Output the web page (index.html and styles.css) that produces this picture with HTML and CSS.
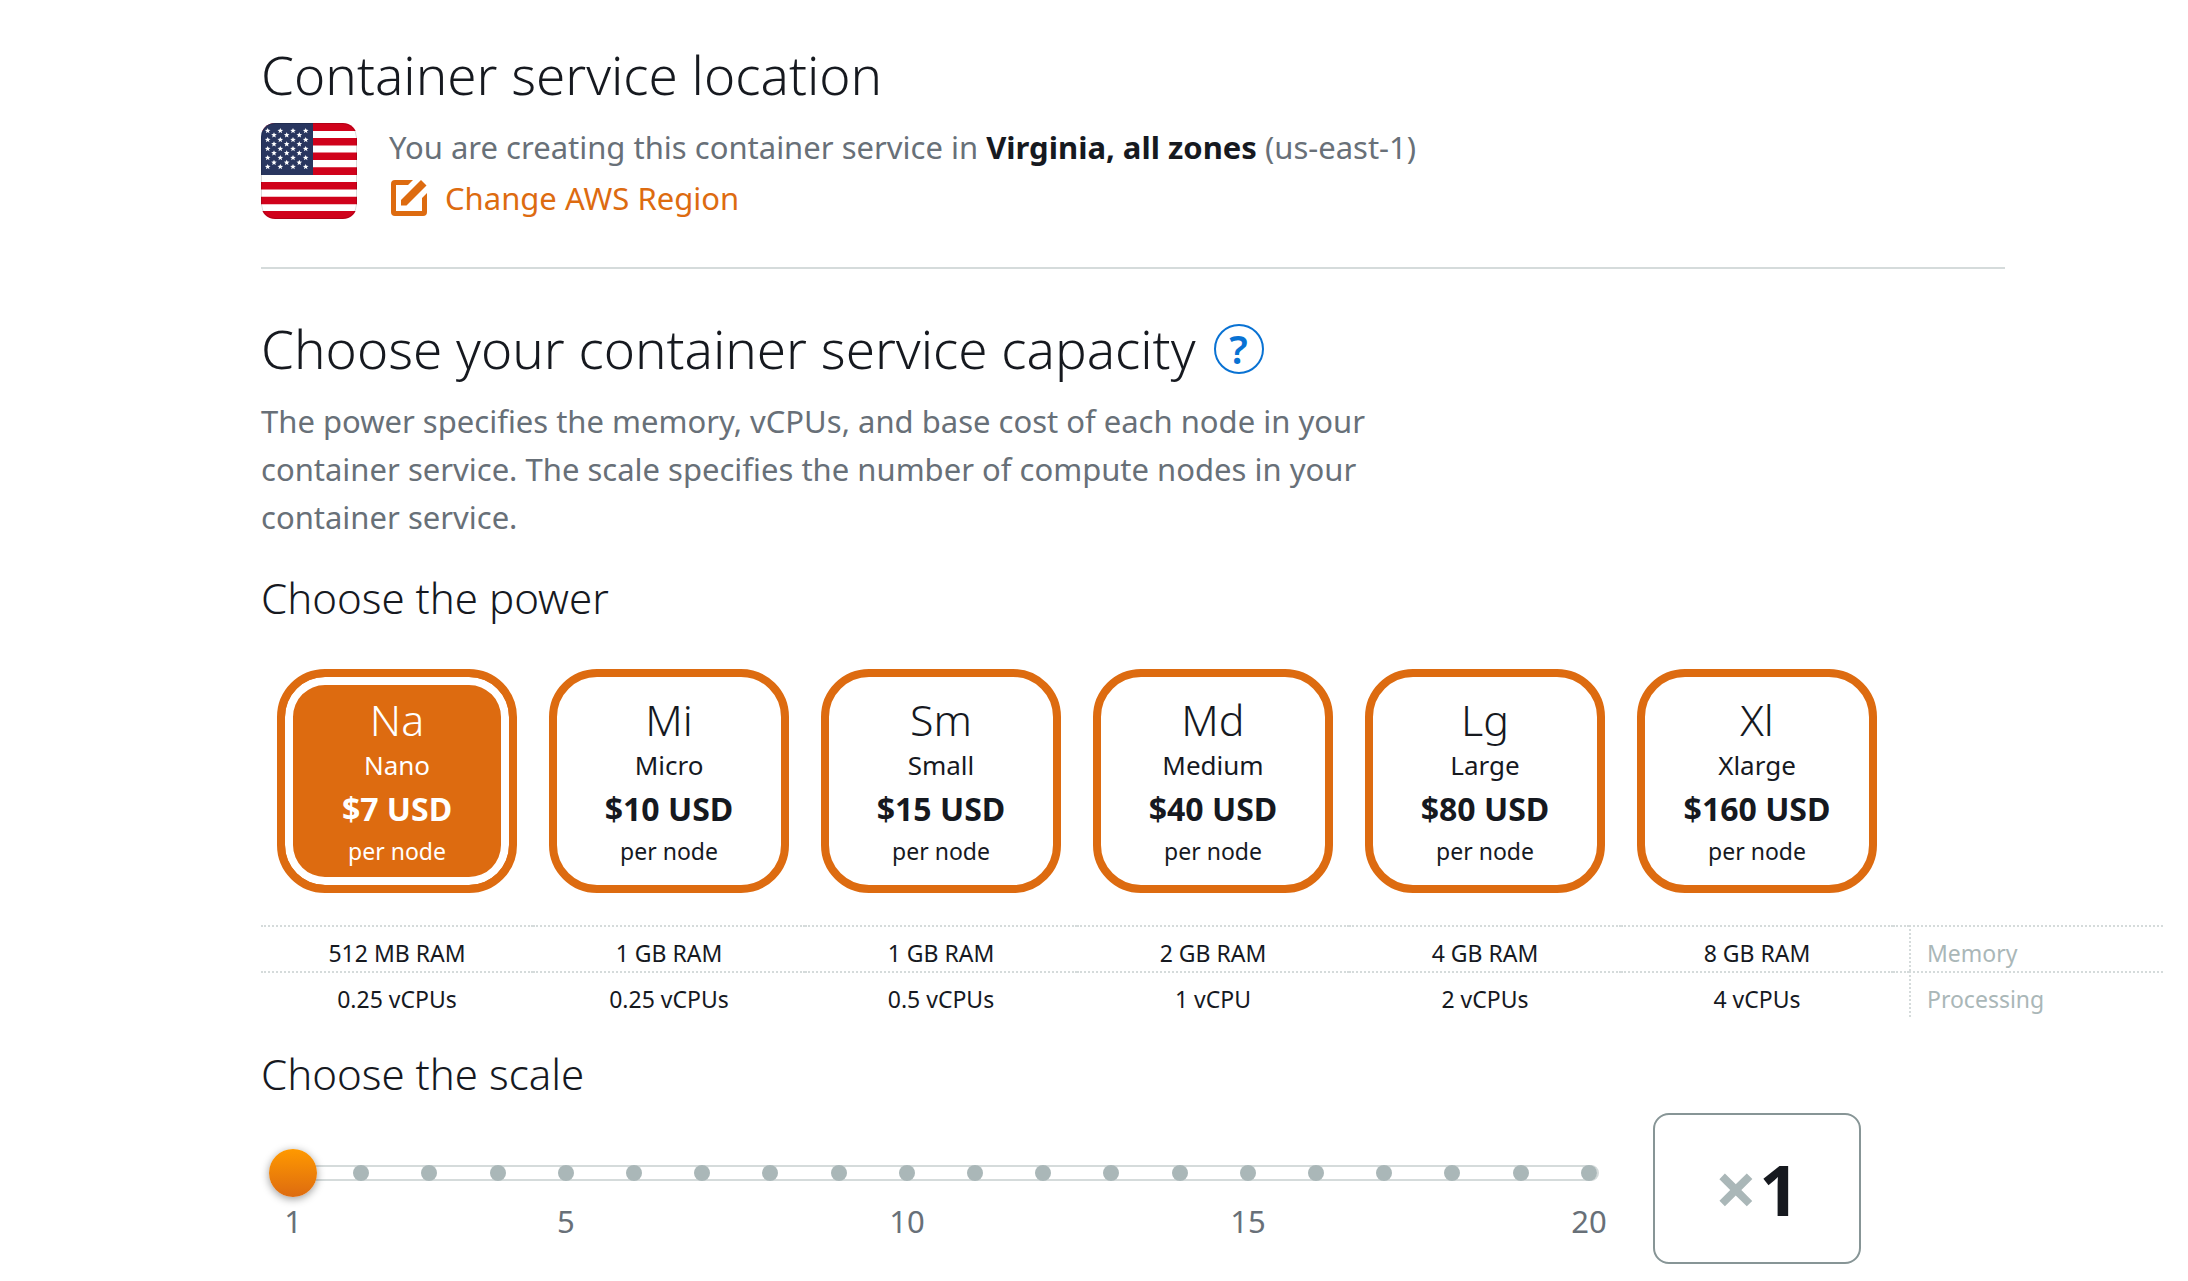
FILE: index.html
```html
<!DOCTYPE html>
<html lang="en">
<head>
<meta charset="utf-8">
<meta name="viewport" content="width=device-width, initial-scale=1">
<title>Create a container service</title>
<link rel="stylesheet" href="styles.css">
</head>
<body>
<main class="page">
  <section class="location">
    <h1 class="title">Container service location</h1>
    <div class="location-row">
      <svg class="flag" viewBox="0 0 96 96" role="img" aria-label="United States">
        <defs>
          <path id="star" d="M0-2.8L.8-.9 2.8-.8 1.2.5 1.8 2.5 0 1.4-1.8 2.5-1.2.5-2.8-.8-.8-.9Z"/>
          <g id="row-a"><use href="#star" x="6.7"/><use href="#star" x="19.3"/><use href="#star" x="32"/><use href="#star" x="44.7"/></g>
          <g id="row-b"><use href="#star" x="13"/><use href="#star" x="25.7"/><use href="#star" x="38.3"/></g>
        </defs>
        <rect width="96" height="96" fill="#fff"/>
        <path fill="#d0021b" d="M0 0h96v8H0zM0 15h96v7.400H0zM0 29.500h96V37H0zM0 44.300h96v7.700H0zM0 59h96v7.500H0zM0 73.700h96v7.500H0zM0 88h96v8H0z"/>
        <path fill="#29365f" d="M0 0h52v52H0z"/>
        <g fill="#fff">
          <use href="#row-a" y="7.700"/><use href="#row-b" y="12"/>
          <use href="#row-a" y="16.700"/><use href="#row-b" y="21"/>
          <use href="#row-a" y="25.700"/><use href="#row-b" y="30"/>
          <use href="#row-a" y="34.700"/><use href="#row-b" y="39.500"/>
          <use href="#row-a" y="43.700"/>
        </g>
        <rect x=".5" y=".5" width="95" height="95" rx="14" fill="none" stroke="#000" stroke-opacity=".15"/>
      </svg>
      <div class="location-info">
        <p class="text">You are creating this container service in <strong>Virginia, all zones</strong> (us-east-1)</p>
        <a class="region-link" href="#region">
          <svg class="edit-icon" viewBox="0 0 36 36" aria-hidden="true">
            <path d="M22 0H4Q0 0 0 4V32Q0 36 4 36H32Q36 36 36 32V13L31 18V31H5V5H17Z"/>
            <path d="M30 0L35.500 5.500 15.500 25.500H10V20Z"/>
          </svg>
          <span>Change AWS Region</span>
        </a>
      </div>
    </div>
  </section>

  <hr class="divider">

  <section class="capacity">
    <div class="title-row">
      <h2 class="title">Choose your container service capacity</h2>
      <button class="help" type="button" aria-label="Help with capacity">?</button>
    </div>
    <p class="text intro">The power specifies the memory, vCPUs, and base cost of each node in your container service. The scale specifies the number of compute nodes in your container service.</p>

    <h3 class="subtitle" id="power-title">Choose the power</h3>
    <div class="powers" role="radiogroup" aria-labelledby="power-title">
      <label class="power"><input type="radio" name="power" checked><span class="abbr">Na</span><span class="name">Nano</span><span class="price">$7 USD</span><span class="unit">per node</span></label>
      <label class="power"><input type="radio" name="power"><span class="abbr">Mi</span><span class="name">Micro</span><span class="price">$10 USD</span><span class="unit">per node</span></label>
      <label class="power"><input type="radio" name="power"><span class="abbr">Sm</span><span class="name">Small</span><span class="price">$15 USD</span><span class="unit">per node</span></label>
      <label class="power"><input type="radio" name="power"><span class="abbr">Md</span><span class="name">Medium</span><span class="price">$40 USD</span><span class="unit">per node</span></label>
      <label class="power"><input type="radio" name="power"><span class="abbr">Lg</span><span class="name">Large</span><span class="price">$80 USD</span><span class="unit">per node</span></label>
      <label class="power"><input type="radio" name="power"><span class="abbr">Xl</span><span class="name">Xlarge</span><span class="price">$160 USD</span><span class="unit">per node</span></label>
    </div>

    <table class="specs">
      <colgroup><col span="6" class="spec-col"><col class="gap-col"><col></colgroup>
      <tbody>
        <tr><td>512 MB RAM</td><td>1 GB RAM</td><td>1 GB RAM</td><td>2 GB RAM</td><td>4 GB RAM</td><td>8 GB RAM</td><td></td><th scope="row">Memory</th></tr>
        <tr><td>0.25 vCPUs</td><td>0.25 vCPUs</td><td>0.5 vCPUs</td><td>1 vCPU</td><td>2 vCPUs</td><td>4 vCPUs</td><td></td><th scope="row">Processing</th></tr>
      </tbody>
    </table>

    <h3 class="subtitle"><label for="scale">Choose the scale</label></h3>
    <div class="scale-row">
      <div class="scale">
        <div class="slider">
          <div class="track"></div>
          <div class="steps">
            <i></i><i></i><i></i><i></i><i></i><i></i><i></i><i></i><i></i><i></i><i></i><i></i><i></i><i></i><i></i><i></i><i></i><i></i><i></i><i></i>
          </div>
          <input class="range" id="scale" type="range" min="1" max="20" value="1">
        </div>
        <div class="ticks">
          <span>1</span><span class="five">5</span><span class="ten">10</span><span class="fifteen">15</span><span class="twenty">20</span>
        </div>
      </div>
      <output class="count" for="scale"><span class="times">×</span><span>1</span></output>
    </div>
  </section>
</main>
</body>
</html>
```
FILE: styles.css
```css
* {
  box-sizing: border-box;
}

body {
  margin: 0;
  background: #fff;
  color: #16191f;
  font-family: "Noto Sans", "Open Sans", sans-serif;
  overflow-x: hidden;
}

.page {
  padding: 39px 183px 16px 261px;
}

.title {
  margin: 0;
  font-size: 53px;
  line-height: 72px;
  font-weight: 300;
}

.subtitle {
  margin: 28px 0 0;
  font-size: 42px;
  line-height: 58px;
  font-weight: 300;
}

.text {
  margin: 0;
  font-size: 31px;
  line-height: 48px;
  color: #687078;
}

.text strong {
  color: #16191f;
}

/* Location */

.location-row {
  display: flex;
  gap: 32px;
  margin-top: 12px;
}

.flag {
  flex: none;
  width: 96px;
  height: 96px;
  border-radius: 14px;
}

.location-info {
  display: flex;
  flex-direction: column;
  align-items: flex-start;
  gap: 3px;
}

.region-link {
  display: flex;
  align-items: center;
  gap: 18px;
  padding-left: 2px;
  font-size: 31px;
  line-height: 48px;
  color: #dd6b10;
  text-decoration: none;
}

.edit-icon {
  width: 36px;
  height: 36px;
  fill: currentColor;
}

.divider {
  margin: 45px 0 44px;
  border: 0;
  border-top: 2px solid #d5dbdb;
}

/* Capacity */

.title-row {
  display: flex;
  align-items: center;
  gap: 18px;
}

.help {
  width: 50px;
  height: 50px;
  padding: 0;
  border: 2px solid #0972d3;
  border-radius: 50%;
  background: none;
  color: #0972d3;
  font: 600 40px/44px "Noto Sans", "Open Sans", sans-serif;
}

.intro {
  max-width: 1120px;
  margin-top: 12px;
}

.powers {
  display: flex;
  gap: 32px;
  margin: 42px 0 0 16px;
}

.power {
  position: relative;
  display: flex;
  flex-direction: column;
  align-items: center;
  flex: none;
  width: 240px;
  height: 224px;
  padding-top: 15px;
  border: 8px solid #dd6b10;
  border-radius: 48px;
  cursor: pointer;
}

.power input {
  position: absolute;
  inset: 0;
  margin: 0;
  opacity: 0;
  cursor: pointer;
}

.power:has(:checked) {
  color: #fff;
  background: #dd6b10;
  box-shadow: inset 0 0 0 8px #fff;
}

.abbr {
  font-size: 43px;
  line-height: 56px;
  font-weight: 300;
}

.name {
  font-size: 26px;
  line-height: 34px;
}

.price {
  font-size: 32px;
  line-height: 54px;
  font-weight: 700;
}

.unit {
  font-size: 23px;
  line-height: 30px;
}

.specs {
  width: calc(100% + 158px);
  margin-top: 32px;
  table-layout: fixed;
  border-spacing: 0;
  font-size: 23px;
  line-height: 34px;
}

.spec-col {
  width: 272px;
}

.gap-col {
  width: 16px;
}

.specs td,
.specs th {
  padding: 9px 0 1px;
  border-top: 2px dotted #d5dbdb;
  text-align: center;
}

.specs th {
  padding-left: 16px;
  border-left: 2px dotted #d5dbdb;
  color: #aab7b8;
  font-weight: 400;
  text-align: left;
}

/* Scale */

.scale-row {
  display: flex;
  gap: 30px;
  margin: 10px 0 0 -2px;
}

.scale {
  flex: 0 1 1364px;
  padding-top: 36px;
}

.slider {
  display: grid;
  align-items: center;
}

.slider > * {
  grid-area: 1 / 1;
}

.track {
  height: 16px;
  margin: 0 24px 0 26px;
  border: 2px solid #d5dbdb;
  border-radius: 8px;
}

.steps,
.ticks {
  display: grid;
  grid-template-columns: repeat(20, 1fr);
  justify-items: center;
}

.steps i {
  width: 16px;
  height: 16px;
  border-radius: 50%;
  background: #aab7b8;
}

.range {
  appearance: none;
  height: 48px;
  margin: 0 10px;
  background: none;
  cursor: pointer;
}

.range::-webkit-slider-thumb {
  appearance: none;
  width: 48px;
  height: 48px;
  border-radius: 50%;
  background: linear-gradient(#f90, #dd6b10);
  box-shadow: 0 2px 8px rgba(0, 0, 0, 0.4);
}

.ticks {
  margin-top: 4px;
  font-size: 31px;
  line-height: 40px;
  color: #687078;
}

.five {
  grid-column: 5;
}

.ten {
  grid-column: 10;
}

.fifteen {
  grid-column: 15;
}

.twenty {
  grid-column: 20;
}

.count {
  display: flex;
  justify-content: center;
  align-items: baseline;
  gap: 2px;
  flex: none;
  width: 208px;
  height: 151px;
  padding-top: 25px;
  border: 2px solid #879596;
  border-radius: 16px;
  font-size: 70px;
  line-height: 96px;
  font-weight: 700;
}

.times {
  font-size: 74px;
  color: #aab7b8;
}
```
